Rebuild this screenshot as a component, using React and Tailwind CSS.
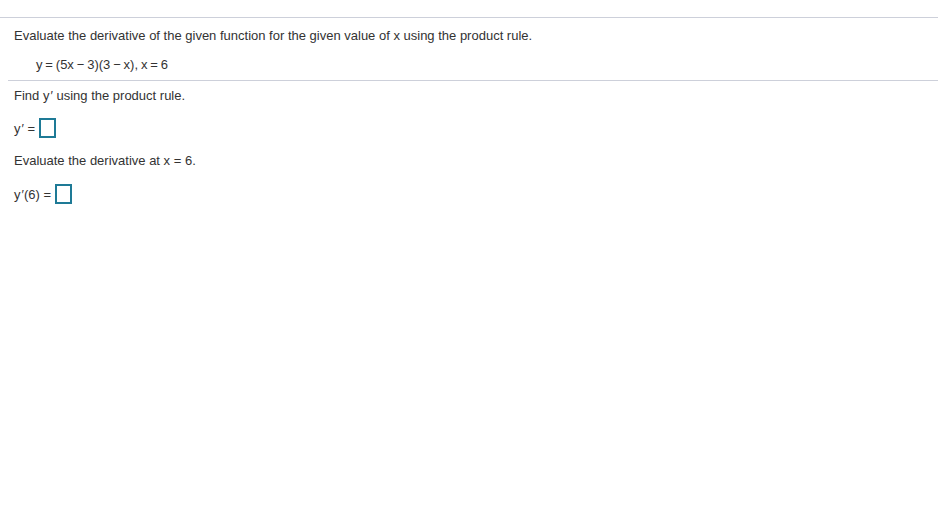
export default function App() {
  return (
    <div className="w-[938px] h-[512px] bg-white text-[#333333] text-[13px] leading-[13px]" style={{ fontFamily: '"Liberation Sans", Arial, sans-serif' }}>
      <div className="h-[17px]" />
      <div className="h-px bg-[#cdd0da]" />
      <div className="pl-[14px] pt-[11px]">Evaluate the derivative of the given function for the given value of x using the product rule.</div>
      <div className="pl-[36px] pt-[16px] pb-[9px] [word-spacing:-0.75px]">y = (5x − 3)(3 − x), x = 6</div>
      <div className="ml-[8px] h-px bg-[#cdd0da]" />
      <div className="pl-[14px] pt-[8px]">Find y<span className="ml-px">′</span> using the product rule.</div>
      <div className="pl-[14px] mt-[16px] flex items-center gap-[4px] h-[20px]">
        <span>y<span className="ml-px">′</span> =</span>
        <span className="w-[17px] h-[20px] border-2 border-[#1e7a96] box-border" />
      </div>
      <div className="pl-[14px] mt-[16px]">Evaluate the derivative at x = 6.</div>
      <div className="pl-[14px] mt-[17px] flex items-center gap-[4px] h-[20px]">
        <span>y<span className="ml-px">′</span>(6) =</span>
        <span className="w-[17px] h-[20px] border-2 border-[#1e7a96] box-border" />
      </div>
    </div>
  );
}
